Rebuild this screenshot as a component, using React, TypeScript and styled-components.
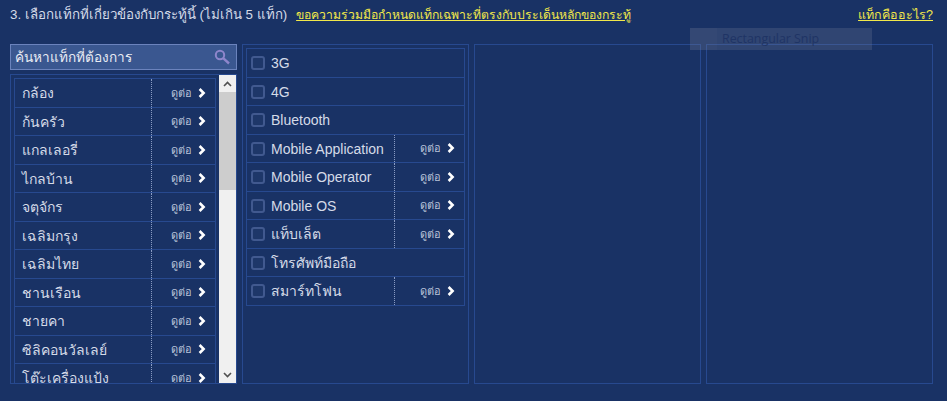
import React from "react";
import styled, { createGlobalStyle } from "styled-components";

const Global = createGlobalStyle`
  html, body { margin: 0; padding: 0; background: #193265; overflow: hidden; }
  * { box-sizing: border-box; }
`;

const Page = styled.div`
  position: relative;
  width: 947px;
  height: 401px;
  background: #193265;
  color: #d5dbe8;
  font-family: Tahoma, "Liberation Sans", "Noto Sans", sans-serif;
  padding: 5px 14px 0 10px;
`;
const Header = styled.div`
  display: flex;
  align-items: center;
  height: 19px;
  font-size: 13.3px;
  white-space: nowrap;
`;
const Note = styled.span`
  margin-left: 9px;
  display: inline-flex;
`;
const YellowLink = styled.a`
  color: #f2e84a;
  text-decoration: underline;
  font-size: 12.2px;
`;
const RightLink = styled(YellowLink)`
  margin-left: auto;
  font-size: 12.5px;
`;
const Columns = styled.div`
  display: grid;
  grid-template-columns: repeat(4, 227px);
  column-gap: 5px;
  margin-top: 20px;
  height: 340px;
`;
const LeftColumn = styled.div`
  display: flex;
  flex-direction: column;
  gap: 4px;
  min-height: 0;
`;
const SearchBox = styled.div`
  height: 26px;
  flex: none;
  display: flex;
  align-items: center;
  justify-content: space-between;
  padding: 0 6px 0 4px;
  background: #3a5790;
  border: 1px solid #6b83bd;
  font-size: 13.6px;
  color: #e9ecf4;
`;
const ListFrame = styled.div`
  flex: 1;
  min-height: 0;
  display: flex;
  border: 1px solid #27498f;
`;
const ListViewport = styled.div`
  flex: 1;
  min-width: 0;
  overflow: hidden;
  padding: 3px 3px 0;
`;
const Rows = styled.div`
  border: 1px solid #27498f;
  border-top: 0;
`;
const Row = styled.div`
  display: flex;
  height: 28.5px;
  align-items: stretch;
  font-size: 14px;
  border-top: 1px solid #27498f;
`;
const RowLabel = styled.div`
  flex: 1;
  min-width: 0;
  display: flex;
  align-items: center;
  padding: 1px 0 0 7px;
  white-space: nowrap;
`;
const More = styled.div<{ $width: number }>`
  width: ${(p) => p.$width}px;
  flex: none;
  display: flex;
  align-items: center;
  justify-content: flex-end;
  gap: 6px;
  padding-right: 9px;
  border-left: 1px dotted #8a9cc4;
  font-size: 11px;
  color: #b9c3d9;
`;
const Scrollbar = styled.div`
  width: 17px;
  flex: none;
  display: flex;
  flex-direction: column;
  background: #f0f0f0;
`;
const ScrollButton = styled.div`
  height: 17px;
  flex: none;
  display: flex;
  align-items: center;
  justify-content: center;
`;
const ScrollThumb = styled.div`
  height: 98px;
  flex: none;
  background: #cdcdcd;
`;
const ScrollSpace = styled.div`
  flex: 1;
`;
const Panel = styled.div`
  border: 1px solid #27498f;
  padding: 3px;
`;
const CheckRows = styled.div`
  border: 1px solid #27498f;
  border-top: 0;
`;
const CheckLabel = styled(RowLabel)`
  gap: 6px;
  padding-left: 4px;
`;
const Check = styled.span`
  width: 14px;
  height: 14px;
  flex: none;
  border: 2px solid #41598f;
  border-radius: 3px;
  background: #1e3769;
`;
const Snip = styled.div`
  position: absolute;
  left: 690px;
  top: 28px;
  width: 182px;
  height: 22px;
  display: flex;
  background: rgba(120, 130, 160, 0.24);
  color: #1f3465;
  font-family: "Open Sans", "Noto Sans", sans-serif;
  font-size: 12.4px;
  line-height: 22px;
`;
const SnipIcon = styled.span`
  width: 27px;
  flex: none;
  margin-right: 5px;
  background: rgba(120, 130, 160, 0.06);
`;

const Chevron = () => (
  <svg width="8" height="10" viewBox="0 0 8 10" aria-hidden="true">
    <path d="M1.6 1 L5.6 5 L1.6 9" fill="none" stroke="#fff" strokeWidth="2.6" />
  </svg>
);
const SearchIcon = () => (
  <svg width="16" height="16" viewBox="0 0 16 16" aria-hidden="true">
    <circle cx="6" cy="6" r="4.2" fill="none" stroke="#8f86cc" strokeWidth="2" />
    <path d="M9.2 9.2 L15 14.5" stroke="#8f86cc" strokeWidth="2.4" />
  </svg>
);
const Arrow = ({ d }: { d: string }) => (
  <svg width="9" height="6" viewBox="0 0 9 6" aria-hidden="true">
    <path d={d} fill="none" stroke="#505050" strokeWidth="1.6" />
  </svg>
);

const categories = [
  "กล้อง", "ก้นครัว", "แกลเลอรี่", "ไกลบ้าน", "จตุจักร", "เฉลิมกรุง",
  "เฉลิมไทย", "ชานเรือน", "ชายคา", "ซิลิคอนวัลเลย์", "โต๊ะเครื่องแป้ง",
];
const tags: [string, boolean][] = [
  ["3G", false], ["4G", false], ["Bluetooth", false],
  ["Mobile Application", true], ["Mobile Operator", true], ["Mobile OS", true],
  ["แท็บเล็ต", true], ["โทรศัพท์มือถือ", false], ["สมาร์ทโฟน", true],
];

const MoreCell = ({ width }: { width: number }) => (
  <More $width={width}>
    ดูต่อ <Chevron />
  </More>
);

export default function App() {
  return (
    <Page>
      <Global />
      <Header>
        3. เลือกแท็กที่เกี่ยวข้องกับกระทู้นี้ (ไม่เกิน 5 แท็ก)
        <Note>
          <YellowLink href="#">ขอความร่วมมือกำหนดแท็กเฉพาะที่ตรงกับประเด็นหลักของกระทู้</YellowLink>
        </Note>
        <RightLink href="#">แท็กคืออะไร?</RightLink>
      </Header>
      <Columns>
        <LeftColumn>
          <SearchBox>
            ค้นหาแท็กที่ต้องการ
            <SearchIcon />
          </SearchBox>
          <ListFrame>
            <ListViewport>
              <Rows>
                {categories.map((c) => (
                  <Row key={c}>
                    <RowLabel>{c}</RowLabel>
                    <MoreCell width={64} />
                  </Row>
                ))}
              </Rows>
            </ListViewport>
            <Scrollbar>
              <ScrollButton><Arrow d="M1 5 L4.5 1.5 L8 5" /></ScrollButton>
              <ScrollThumb />
              <ScrollSpace />
              <ScrollButton><Arrow d="M1 1 L4.5 4.5 L8 1" /></ScrollButton>
            </Scrollbar>
          </ListFrame>
        </LeftColumn>
        <Panel>
          <CheckRows>
            {tags.map(([t, more]) => (
              <Row key={t}>
                <CheckLabel><Check />{t}</CheckLabel>
                {more && <MoreCell width={70} />}
              </Row>
            ))}
          </CheckRows>
        </Panel>
        <Panel />
        <Panel />
      </Columns>
      <Snip><SnipIcon />Rectangular Snip</Snip>
    </Page>
  );
}
